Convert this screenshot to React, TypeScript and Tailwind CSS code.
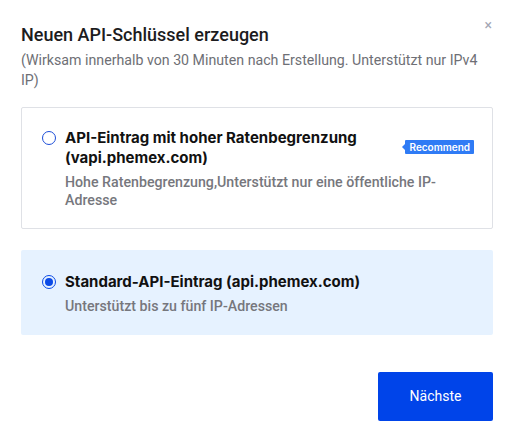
import React, { useState } from 'react';

const Radio: React.FC<{ checked: boolean }> = ({ checked }) => (
  <span
    className={
      'mt-[3px] flex h-[14px] w-[14px] shrink-0 items-center justify-center rounded-full border-[1.5px] ' +
      (checked ? 'border-[#0b4ae6]' : 'border-[#1d4ed8]')
    }
  >
    {checked && <span className="h-[8px] w-[8px] rounded-full bg-[#0b4ae6]" />}
  </span>
);

const App: React.FC = () => {
  const [selected, setSelected] = useState<'vapi' | 'api'>('api');

  return (
    <div className="relative min-h-[441px] w-[514px] bg-white px-[21px] pt-[22px] font-['Roboto',sans-serif]">
      <button type="button" className="absolute right-[22px] top-[18px] text-[14px] leading-none text-[#a3a6b4]">
        ×
      </button>

      <h2 className="text-[18px] font-medium leading-[26px] text-[#1c1c1e]">Neuen API-Schlüssel erzeugen</h2>
      <p className="mt-[2px] pr-[6px] text-[14.2px] leading-[20px] text-[#6e6f75]">
        (Wirksam innerhalb von 30 Minuten nach Erstellung. Unterstützt nur IPv4 IP)
      </p>

      <div className="mt-[17px] flex flex-col gap-[21px]">
        <div
          onClick={() => setSelected('vapi')}
          className={
            'flex cursor-pointer gap-[9px] rounded-[2px] border px-[20px] pb-[19px] pt-[20px] ' +
            (selected === 'vapi' ? 'border-transparent bg-[#e6f2ff]' : 'border-[#dfe1e6] bg-white')
          }
        >
          <Radio checked={selected === 'vapi'} />
          <div className="flex-1">
            <div className="flex items-start justify-between">
              <div className="w-[310px] font-['Inter',sans-serif] text-[15px] font-bold leading-[20px] text-[#111]">
                API-Eintrag mit hoher Ratenbegrenzung (vapi.phemex.com)
              </div>
              <span className="relative mr-[-2px] mt-[12px] rounded-[1px] bg-[#2f7bf5] px-[4px] font-['Inter',sans-serif] text-[10px] font-semibold leading-[14px] text-white">
                <span className="absolute left-[-3px] top-[4px] h-0 w-0 border-y-[3px] border-r-[3px] border-y-transparent border-r-[#2f7bf5]" />
                Recommend
              </span>
            </div>
            <p className="mt-[5px] text-[14.2px] font-medium leading-[18px] text-[#76777d]">
              Hohe Ratenbegrenzung,Unterstützt nur eine öffentliche IP-Adresse
            </p>
          </div>
        </div>

        <div
          onClick={() => setSelected('api')}
          className={
            'flex cursor-pointer gap-[9px] rounded-[2px] border px-[20px] pb-[19px] pt-[21px] ' +
            (selected === 'api' ? 'border-transparent bg-[#e6f2ff]' : 'border-[#dfe1e6] bg-white')
          }
        >
          <Radio checked={selected === 'api'} />
          <div className="flex-1">
            <div className="font-['Inter',sans-serif] text-[15px] font-bold leading-[20px] text-[#111]">
              Standard-API-Eintrag (api.phemex.com)
            </div>
            <p className="mt-[5px] text-[14.2px] font-medium leading-[18px] text-[#76777d]">
              Unterstützt bis zu fünf IP-Adressen
            </p>
          </div>
        </div>
      </div>

      <div className="mt-[37px] flex justify-end">
        <button
          type="button"
          className="h-[49px] w-[115px] rounded-[2px] bg-[#0044e9] text-[14px] text-white"
        >
          Nächste
        </button>
      </div>
    </div>
  );
};

export default App;
